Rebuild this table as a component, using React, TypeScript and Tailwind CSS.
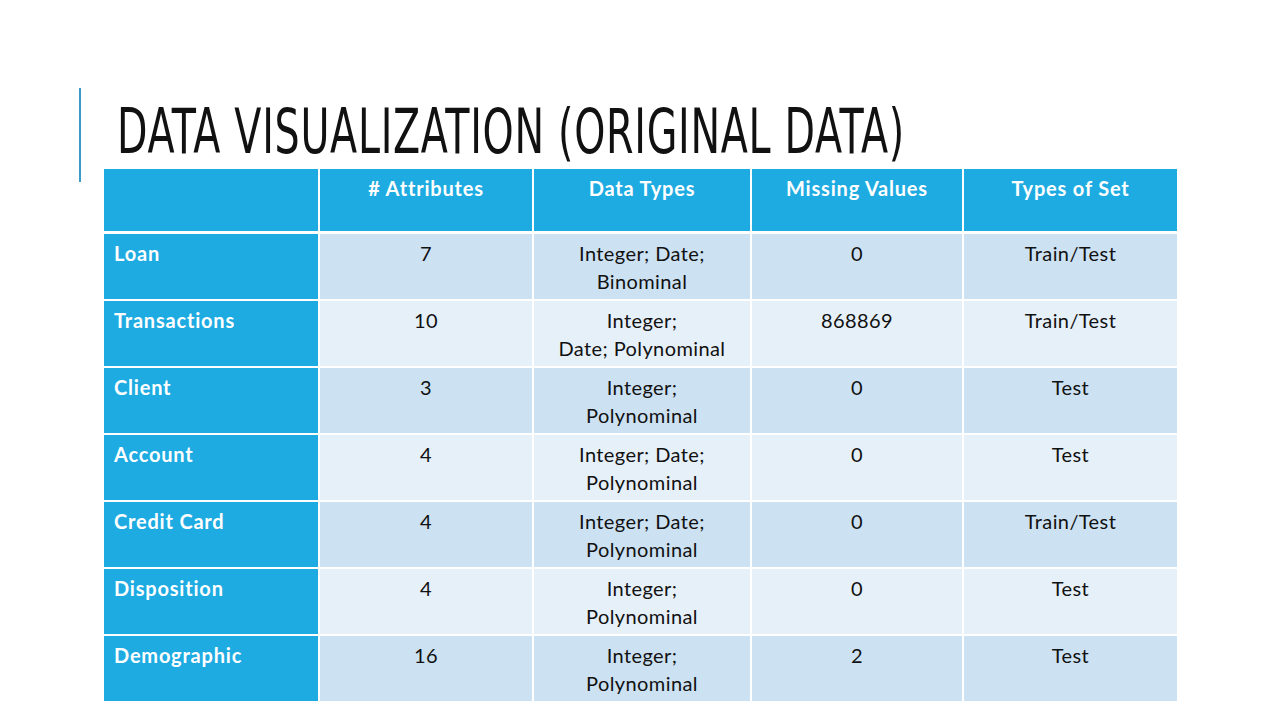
import React from "react";

const rows = [
  ["Loan", "7", ["Integer; Date;", "Binominal"], "0", "Train/Test"],
  ["Transactions", "10", ["Integer;", "Date; Polynominal"], "868869", "Train/Test"],
  ["Client", "3", ["Integer;", "Polynominal"], "0", "Test"],
  ["Account", "4", ["Integer; Date;", "Polynominal"], "0", "Test"],
  ["Credit Card", "4", ["Integer; Date;", "Polynominal"], "0", "Train/Test"],
  ["Disposition", "4", ["Integer;", "Polynominal"], "0", "Test"],
  ["Demographic", "16", ["Integer;", "Polynominal"], "2", "Test"],
] as const;

const headers = ["", "# Attributes", "Data Types", "Missing Values", "Types of Set"];

export default function App() {
  return (
    <div className="w-[1280px] h-[720px] bg-white relative overflow-hidden" style={{ fontFamily: "Lato, 'Open Sans', sans-serif" }}>
      <div className="flex">
        <div className="ml-[79px] mt-[88px] w-[2px] h-[94px] bg-[#3d9cc6]" />
        <div className="ml-[36px] mt-[98px] h-[68px] whitespace-nowrap">
          <h1
            className="origin-left scale-x-[0.71] text-[62px] leading-[68px] text-[#111] tracking-[1px]"
            style={{ fontFamily: "'DejaVu Sans Condensed', 'DejaVu Sans', sans-serif" }}
          >
            DATA VISUALIZATION (ORIGINAL DATA)
          </h1>
        </div>
      </div>
      <div className="absolute left-[104px] top-[169px]">
        <div className="grid grid-cols-[214px_212px_216px_210px_213px] gap-x-[2px] bg-white">
          {headers.map((h, i) => (
            <div key={i} className="h-[62px] bg-[#1dabe2] text-white font-bold text-[20px] tracking-[0.8px] leading-[24px] text-center pt-[7px]">
              {h}
            </div>
          ))}
        </div>
        <div className="mt-[3px] flex flex-col gap-y-[2px]">
          {rows.map((r, ri) => {
            const bg = ri % 2 === 0 ? "bg-[#cce2f3]" : "bg-[#e6f0f9]";
            const cell = `h-[65px] ${bg} text-[20px] tracking-[0.4px] leading-[28px] text-center pt-[5px] text-[#111]`;
            return (
              <div key={ri} className="grid grid-cols-[214px_212px_216px_210px_213px] gap-x-[2px]">
                <div className="h-[65px] bg-[#1dabe2] text-white font-bold text-[20px] tracking-[0.8px] leading-[28px] pl-[10px] pt-[5px]">{r[0]}</div>
                <div className={cell}>{r[1]}</div>
                <div className={cell}>
                  <div>{r[2][0]}</div>
                  <div>{r[2][1]}</div>
                </div>
                <div className={cell}>{r[3]}</div>
                <div className={cell}>{r[4]}</div>
              </div>
            );
          })}
        </div>
      </div>
    </div>
  );
}
